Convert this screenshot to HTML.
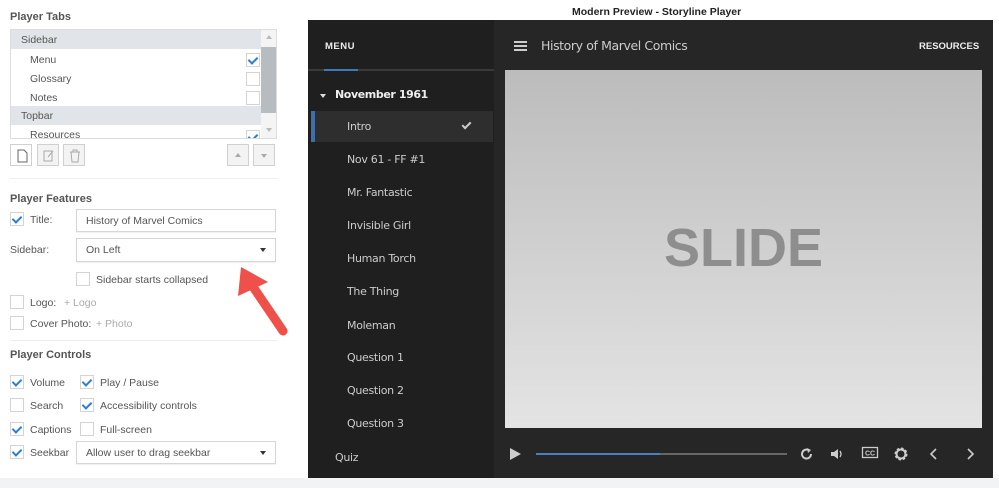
<!DOCTYPE html>
<html><head><meta charset="utf-8"><style>
*{margin:0;padding:0;box-sizing:border-box}
body{width:999px;height:488px;background:#fff;font-family:"Liberation Sans",sans-serif;position:relative;overflow:hidden;color:#444}
.a{position:absolute}
.h{font-size:11px;font-weight:bold;color:#555}
.t{font-size:10.5px;color:#555;white-space:nowrap}
.cb{position:absolute;width:14px;height:14px;border:1px solid #d4d4d4;background:#fff}
.cb.on::after{content:"";position:absolute;left:3px;top:1px;width:4px;height:7px;border:solid #2a7fd4;border-width:0 2px 2px 0;transform:rotate(45deg)}
.inp{position:absolute;border:1px solid #d6d6d6;background:#fff;font-size:10.5px;color:#555;padding-left:9px;display:flex;align-items:center;box-shadow:0 1px 1px #eee}
.dd::after{content:"";position:absolute;right:9px;top:50%;margin-top:-2px;border:3.5px solid transparent;border-top:4px solid #333}
.btn{position:absolute;width:22px;height:22px;border:1px solid #d0d0d0;background:#f3f3f3}
.m{position:absolute;left:347px;font-size:11px;color:#ccc;font-family:"DejaVu Sans",sans-serif;letter-spacing:-.3px}
.ic{position:absolute}
</style></head><body>
<div class="a h" style="left:10px;top:11px">Player Tabs</div>
<div class="a" style="left:10px;top:29px;width:267px;height:110px;border:1px solid #ddd;overflow:hidden">
 <div class="a" style="left:0;top:0;width:250px;height:19px;background:#e1e4e8"></div>
 <div class="a t" style="left:10px;top:4px">Sidebar</div>
 <div class="a t" style="left:19px;top:24px">Menu</div>
 <div class="a t" style="left:19px;top:43px">Glossary</div>
 <div class="a t" style="left:19px;top:62px">Notes</div>
 <div class="a" style="left:0;top:76px;width:250px;height:19px;background:#e1e4e8"></div>
 <div class="a t" style="left:10px;top:80px">Topbar</div>
 <div class="a t" style="left:19px;top:99px">Resources</div>
 <div class="cb on" style="left:235px;top:23px"></div>
 <div class="cb" style="left:235px;top:42px"></div>
 <div class="cb" style="left:235px;top:61px"></div>
 <div class="cb on" style="left:235px;top:100px"></div>
 <div class="a" style="left:250px;top:0;width:16px;height:110px;background:#f4f4f4"></div>
 <div class="a" style="left:250px;top:17px;width:16px;height:66px;background:#b7bcc0"></div>
 <div class="a" style="left:255px;top:5px;border:3px solid transparent;border-bottom:4px solid #bbb;border-top:0"></div>
 <div class="a" style="left:255px;top:98px;border:3px solid transparent;border-top:4px solid #bbb;border-bottom:0"></div>
</div>
<div class="btn" style="left:10px;top:144px;background:#fff"><svg width="22" height="22"><path d="M7 5h6l3 3v9H7z" fill="none" stroke="#666"/></svg></div>
<div class="btn" style="left:37px;top:144px"><svg width="22" height="22"><path d="M6 6h8v10H6z M10 12l5-6" fill="none" stroke="#aaa"/></svg></div>
<div class="btn" style="left:63px;top:144px"><svg width="22" height="22"><path d="M6 7h10M9 7V5h4v2M7 7l1 10h6l1-10" fill="none" stroke="#aaa"/></svg></div>
<div class="btn" style="left:227px;top:144px"><div class="a" style="left:7px;top:8px;border:3px solid transparent;border-bottom:4px solid #aaa;border-top:0"></div></div>
<div class="btn" style="left:253px;top:144px"><div class="a" style="left:7px;top:9px;border:3px solid transparent;border-top:4px solid #aaa;border-bottom:0"></div></div>
<div class="a" style="left:10px;top:178px;width:267px;height:1px;background:#eee"></div>
<div class="a h" style="left:10px;top:193px">Player Features</div>
<div class="cb on" style="left:10px;top:212px"></div>
<div class="a t" style="left:30px;top:214px">Title:</div>
<div class="inp" style="left:76px;top:209px;width:200px;height:23px">History of Marvel Comics</div>
<div class="a t" style="left:10px;top:244px">Sidebar:</div>
<div class="inp dd" style="left:76px;top:238px;width:200px;height:24px">On Left</div>
<div class="cb" style="left:76px;top:272px"></div>
<div class="a t" style="left:96px;top:274px">Sidebar starts collapsed</div>
<div class="cb" style="left:10px;top:295px"></div>
<div class="a t" style="left:30px;top:297px">Logo:</div>
<div class="a t" style="left:64px;top:297px;color:#aaa">+ Logo</div>
<div class="cb" style="left:10px;top:316px"></div>
<div class="a t" style="left:30px;top:318px">Cover Photo:</div>
<div class="a t" style="left:96px;top:318px;color:#aaa">+ Photo</div>
<div class="a" style="left:10px;top:340px;width:267px;height:1px;background:#eee"></div>
<div class="a h" style="left:10px;top:349px">Player Controls</div>
<div class="cb on" style="left:10px;top:375px"></div><div class="a t" style="left:30px;top:377px">Volume</div>
<div class="cb on" style="left:80px;top:375px"></div><div class="a t" style="left:100px;top:377px">Play / Pause</div>
<div class="cb" style="left:10px;top:398px"></div><div class="a t" style="left:30px;top:400px">Search</div>
<div class="cb on" style="left:80px;top:398px"></div><div class="a t" style="left:100px;top:400px">Accessibility controls</div>
<div class="cb on" style="left:10px;top:422px"></div><div class="a t" style="left:30px;top:424px">Captions</div>
<div class="cb" style="left:80px;top:422px"></div><div class="a t" style="left:100px;top:424px">Full-screen</div>
<div class="cb on" style="left:10px;top:445px"></div><div class="a t" style="left:30px;top:447px">Seekbar</div>
<div class="inp dd" style="left:76px;top:441px;width:200px;height:23px">Allow user to drag seekbar</div>
<svg class="a" style="left:225px;top:255px" width="70" height="90"><path d="M20 20L58 76" stroke="#f0504a" stroke-width="9" stroke-linecap="round"/><polygon points="16,12 13,41 43,27" fill="#f0504a"/></svg>

<div class="a" style="left:0;top:478px;width:999px;height:10px;background:#f2f3f4"></div>
<div class="a" style="left:572px;top:6px;font-size:10.5px;font-weight:bold;color:#222">Modern Preview - Storyline Player</div>

<div class="a" style="left:308px;top:20px;width:685px;height:458px;background:#262626"></div>
<div class="a" style="left:308px;top:20px;width:186px;height:458px;background:#1f1f1f"></div>
<div class="a" style="left:308px;top:69px;width:186px;height:2px;background:#3a3a3a"></div>
<div class="a" style="left:324px;top:69px;width:34px;height:2px;background:#3f78b8"></div>
<div class="a" style="left:325px;top:41px;font-size:9.5px;font-weight:bold;color:#eee;letter-spacing:.5px">MENU</div>
<div class="a" style="left:919px;top:41px;font-size:9.5px;font-weight:bold;color:#eee;letter-spacing:0">RESOURCES</div>
<div class="a" style="left:514px;top:41px;width:13px;height:2px;background:#ccc;box-shadow:0 4px 0 #ccc,0 8px 0 #ccc"></div>
<div class="a" style="left:541px;top:38px;font-size:12.5px;color:#ccc;font-family:'DejaVu Sans',sans-serif;letter-spacing:-.4px">History of Marvel Comics</div>
<div class="a" style="left:320px;top:94px;border:3px solid transparent;border-top:4px solid #ddd"></div>
<div class="a" style="left:335px;top:88px;font-size:11px;font-weight:bold;color:#eee;font-family:'DejaVu Sans',sans-serif;letter-spacing:-.4px">November 1961</div>
<div class="a" style="left:311px;top:111px;width:182px;height:31px;background:#2e2e2e"></div>
<div class="a" style="left:311px;top:111px;width:4px;height:31px;background:#3f6fa8"></div>
<div class="a" style="left:464px;top:120px;width:5px;height:9px;border:solid #ccc;border-width:0 2px 2px 0;transform:rotate(45deg)"></div>
<div class="m" style="top:120px">Intro</div>
<div class="m" style="top:153px">Nov 61 - FF #1</div>
<div class="m" style="top:186px">Mr. Fantastic</div>
<div class="m" style="top:219px">Invisible Girl</div>
<div class="m" style="top:252px">Human Torch</div>
<div class="m" style="top:285px">The Thing</div>
<div class="m" style="top:319px">Moleman</div>
<div class="m" style="top:351px">Question 1</div>
<div class="m" style="top:384px">Question 2</div>
<div class="m" style="top:417px">Question 3</div>
<div class="m" style="top:451px;left:335px">Quiz</div>

<div class="a" style="left:505px;top:70px;width:477px;height:358px;background:linear-gradient(#bcbcbc,#e4e4e4)"></div>
<div class="a" style="left:505px;top:217px;width:477px;text-align:center;font-size:54px;font-weight:bold;color:#8e8e8e">SLIDE</div>

<div class="a" style="left:510px;top:448px;border:6px solid transparent;border-left:11px solid #ccc;border-right:0"></div>
<div class="a" style="left:536px;top:453px;width:251px;height:2px;background:#666"></div>
<div class="a" style="left:536px;top:453px;width:124px;height:2px;background:#4a7fc1"></div>
<svg class="ic" style="left:799px;top:446px" width="16" height="16"><path d="M12 8a4.5 4.5 0 1 1-2-3.7" fill="none" stroke="#ccc" stroke-width="2"/><path d="M8 2l4 2-3 3z" fill="#ccc"/></svg>
<svg class="ic" style="left:829px;top:446px" width="16" height="16"><path d="M2 6h3l4-3v10l-4-3H2z" fill="#ccc"/><path d="M11 5q2 3 0 6" fill="none" stroke="#ccc" stroke-width="1.3"/></svg>
<svg class="ic" style="left:861px;top:445px" width="18" height="16"><rect x="1.5" y="2.5" width="15" height="10" fill="none" stroke="#ccc" stroke-width="1.3"/><text x="9" y="10.5" font-size="7" font-family="Liberation Sans" font-weight="bold" fill="#ccc" text-anchor="middle">CC</text></svg>
<svg class="ic" style="left:893px;top:446px" width="16" height="16"><circle cx="8" cy="8" r="5" fill="none" stroke="#ccc" stroke-width="3" stroke-dasharray="2.2 1.7"/><circle cx="8" cy="8" r="4.5" fill="none" stroke="#ccc" stroke-width="2"/></svg>
<svg class="ic" style="left:928px;top:446px" width="12" height="16"><path d="M8 3L3 8l5 5" fill="none" stroke="#ccc" stroke-width="1.6"/></svg>
<svg class="ic" style="left:964px;top:446px" width="12" height="16"><path d="M4 3l5 5-5 5" fill="none" stroke="#ccc" stroke-width="1.6"/></svg>
</body></html>
